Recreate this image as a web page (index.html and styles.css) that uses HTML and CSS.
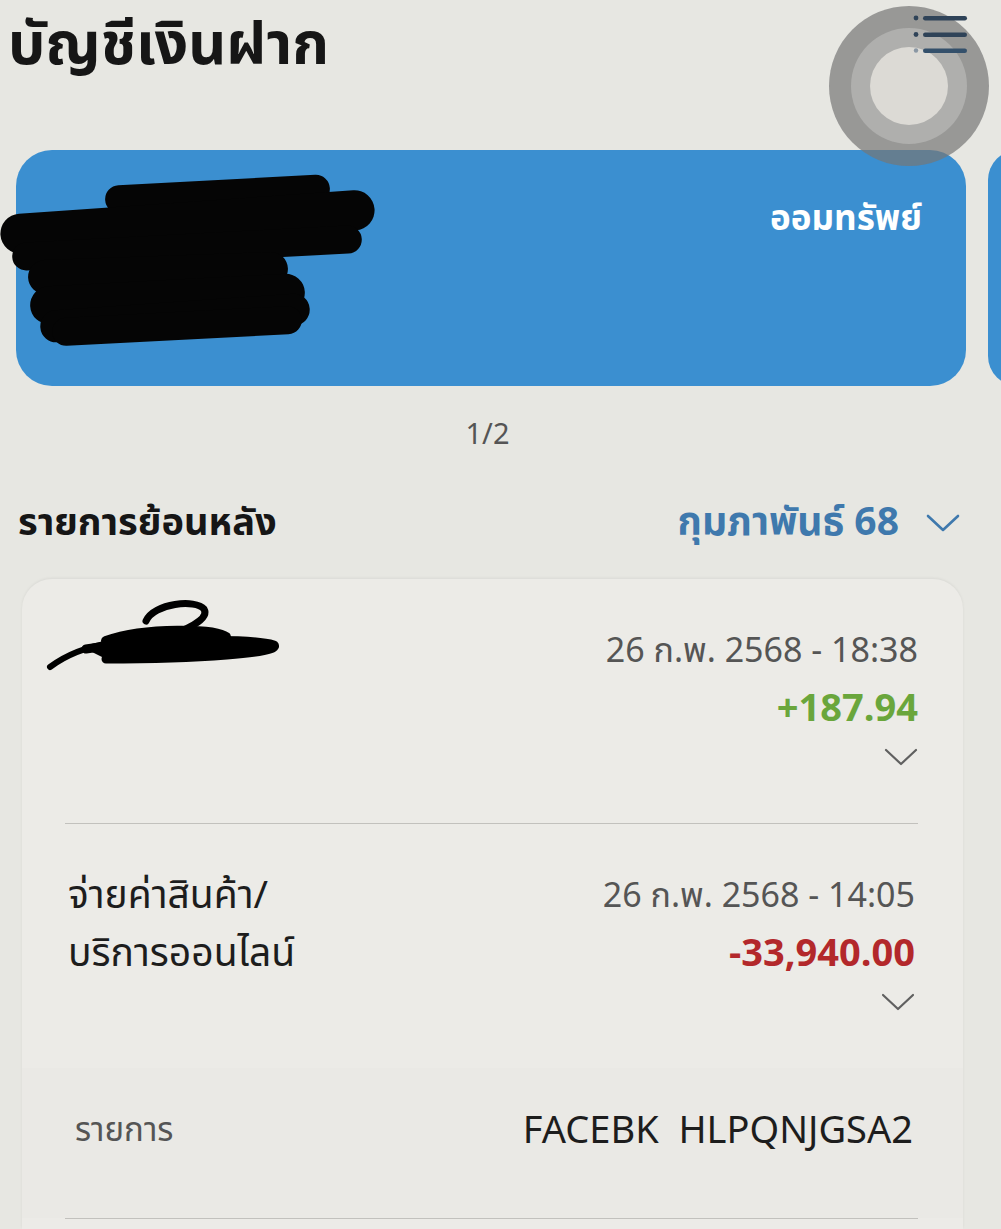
FILE: index.html
```html
<!DOCTYPE html>
<html lang="th">
<head>
<meta charset="utf-8">
<link rel="stylesheet" href="styles.css">
</head>
<body>
<div class="screen">
  <header class="top">
    <h1 class="title">บัญชีเงินฝาก</h1>
  </header>

  <div class="fab">
    <div class="fab-ring">
      <div class="fab-mid">
        <div class="fab-inner"></div>
      </div>
    </div>
    <svg class="menu-icon" width="56" height="40" viewBox="0 0 56 40">
      <circle cx="3" cy="3" r="2.4" fill="#2f4358"/>
      <circle cx="3" cy="19.5" r="2.4" fill="#2f4358"/>
      <circle cx="3" cy="35.5" r="2.2" fill="#8a97a4"/>
      <rect x="10" y="1" width="44" height="4.5" rx="2.2" fill="#2f4358"/>
      <rect x="10" y="17.5" width="44" height="4.5" rx="2.2" fill="#2f4358"/>
      <rect x="10" y="33.5" width="44" height="4.5" rx="2.2" fill="#34506b"/>
    </svg>
  </div>

  <section class="carousel">
    <div class="acct-card">
      <div class="redact redact-acct">
        <span class="blob b1"></span>
        <span class="blob b2"></span>
        <span class="blob b3"></span>
        <span class="blob b4"></span>
        <span class="blob b5"></span>
        <span class="blob b6"></span>
        <span class="blob b7"></span>
      </div>
      <div class="acct-type">ออมทรัพย์</div>
    </div>
    <div class="acct-card next"></div>
  </section>

  <div class="pager">1/2</div>

  <div class="section-head">
    <h2 class="section-title">รายการย้อนหลัง</h2>
    <div class="month">
      <span>กุมภาพันธ์ 68</span>
      <svg width="36" height="22" viewBox="0 0 36 22"><path d="M3 4 L18 18 L33 4" fill="none" stroke="#3f79ad" stroke-width="2.6" stroke-linecap="round" stroke-linejoin="round"/></svg>
    </div>
  </div>

  <section class="tx-card">
    <div class="tx">
      <div class="tx-left">
        <div class="redact redact-name">
          <svg width="250" height="80" viewBox="0 0 250 80">
            <path d="M100 24 C 108 6, 150 2, 158 12 C 164 22, 140 34, 112 42" fill="none" stroke="#000" stroke-width="7" stroke-linecap="round"/>
            <path d="M60 44 C 100 30, 170 32, 180 40 C 185 48, 120 54, 70 54" fill="#000" stroke="#000" stroke-width="10" stroke-linecap="round" stroke-linejoin="round"/>
            <path d="M40 52 C 90 44, 200 40, 228 48 C 236 56, 150 62, 60 62" fill="#000" stroke="#000" stroke-width="9" stroke-linecap="round" stroke-linejoin="round"/>
            <path d="M4 70 C 20 58, 40 50, 64 46" fill="none" stroke="#000" stroke-width="6" stroke-linecap="round"/>
          </svg>
        </div>
      </div>
      <div class="tx-right">
        <div class="tx-date">26 ก.พ. 2568 - 18:38</div>
        <div class="tx-amount plus">+187.94</div>
        <svg class="chev" width="34" height="20" viewBox="0 0 34 20"><path d="M2 3 L17 17 L32 3" fill="none" stroke="#606060" stroke-width="2.2" stroke-linecap="round" stroke-linejoin="round"/></svg>
      </div>
    </div>
    <div class="divider"></div>
    <div class="tx second">
      <div class="tx-left">
        <div class="tx-desc">จ่ายค่าสินค้า/<br>บริการออนไลน์</div>
      </div>
      <div class="tx-right">
        <div class="tx-date">26 ก.พ. 2568 - 14:05</div>
        <div class="tx-amount minus">-33,940.00</div>
        <svg class="chev" width="34" height="20" viewBox="0 0 34 20"><path d="M2 3 L17 17 L32 3" fill="none" stroke="#606060" stroke-width="2.2" stroke-linecap="round" stroke-linejoin="round"/></svg>
      </div>
    </div>
    <div class="detail">
      <div class="detail-row">
        <span class="detail-label">รายการ</span>
        <span class="detail-value">FACEBK&nbsp;&nbsp;HLPQNJGSA2</span>
      </div>
    </div>
    <div class="divider bottom"></div>
  </section>
</div>
</body>
</html>
```

FILE: styles.css
```css
* { box-sizing: border-box; }
html, body { margin: 0; padding: 0; }
body {
  background: #e7e7e2;
  font-family: "Noto Sans Thai", "Noto Sans", "DejaVu Sans", sans-serif;
  color: #1d1d1d;
  width: 1001px;
  height: 1229px;
  overflow: hidden;
}
.screen {
  position: relative;
  width: 1001px;
  height: 1229px;
  display: flex;
  flex-direction: column;
}
.top {
  height: 150px;
  padding: 0 0 0 8px;
}
.title {
  margin: 0;
  padding-top: 2px;
  font-size: 59px;
  font-weight: 700;
  line-height: 88px;
  color: #161616;
}

/* floating button */
.fab {
  position: absolute;
  left: 829px;
  top: 6px;
  width: 160px;
  height: 160px;
  z-index: 5;
}
.fab-ring {
  width: 160px;
  height: 160px;
  border-radius: 50%;
  background: rgba(118,118,118,0.7);
  display: flex;
  align-items: center;
  justify-content: center;
}
.fab-mid {
  width: 116px;
  height: 116px;
  border-radius: 50%;
  background: rgba(190,190,188,0.6);
  display: flex;
  align-items: center;
  justify-content: center;
}
.fab-inner {
  width: 78px;
  height: 78px;
  border-radius: 50%;
  background: #dcdad5;
}
.menu-icon {
  position: absolute;
  left: 84px;
  top: 9px;
}

/* carousel */
.carousel {
  display: flex;
  gap: 22px;
  padding-left: 16px;
  height: 236px;
}
.acct-card {
  position: relative;
  flex: 0 0 950px;
  height: 236px;
  border-radius: 36px;
  background: #3b8fd0;
  display: flex;
  justify-content: flex-end;
  padding: 48px 44px 0 0;
}
.acct-card.next { flex: 0 0 40px; border-radius: 30px 0 0 30px; }
.acct-type {
  color: #ffffff;
  font-size: 35px;
  font-weight: 700;
  line-height: 44px;
}
.redact { position: absolute; }
.redact-acct {
  left: -16px;
  top: 22px;
  width: 390px;
  height: 180px;
}
.blob {
  position: absolute;
  background: #050505;
  border-radius: 30px;
}
.b1 { left: 105px; top: 8px; width: 225px; height: 28px; transform: rotate(-3deg); }
.b2 { left: 0; top: 30px; width: 375px; height: 40px; transform: rotate(-4deg); }
.b3 { left: 12px; top: 62px; width: 350px; height: 28px; transform: rotate(-3deg); }
.b4 { left: 28px; top: 84px; width: 260px; height: 34px; transform: rotate(-2deg); }
.b5 { left: 30px; top: 108px; width: 275px; height: 38px; transform: rotate(-3deg); }
.b6 { left: 40px; top: 130px; width: 270px; height: 32px; transform: rotate(-4deg); }
.b7 { left: 52px; top: 140px; width: 250px; height: 28px; transform: rotate(-3deg); }

.pager {
  height: 98px;
  display: flex;
  align-items: center;
  justify-content: center;
  font-size: 29px;
  color: #555;
  padding-right: 26px;
}

.section-head {
  display: flex;
  justify-content: space-between;
  align-items: center;
  padding: 0 40px 0 18px;
  height: 78px;
}
.section-title {
  margin: 0;
  font-size: 38px;
  font-weight: 700;
  color: #161616;
}
.month {
  display: flex;
  align-items: center;
  gap: 26px;
  color: #3f79ad;
  font-size: 39px;
  font-weight: 700;
}

/* transactions card */
.tx-card {
  margin: 17px 38px 0 22px;
  flex: 1;
  background: #ecebe7;
  border-radius: 30px 30px 0 0;
  box-shadow: 0 -1px 3px rgba(0,0,0,0.06);
  display: flex;
  flex-direction: column;
}
.tx {
  display: flex;
  justify-content: space-between;
  padding: 44px 45px 0 46px;
  height: 244px;
}
.tx.second { padding-top: 44px; height: 244px; padding-right: 48px; }
.tx-left { position: relative; width: 380px; }
.redact-name { left: -22px; top: -26px; }
.tx-right {
  display: flex;
  flex-direction: column;
  align-items: flex-end;
}
.tx-date {
  font-size: 34px;
  color: #555;
  line-height: 58px;
}
.tx-amount {
  font-size: 38px;
  font-weight: 700;
  line-height: 58px;
}
.tx-amount.plus { color: #6aa63c; }
.tx-amount.minus { color: #b3282b; }
.chev { margin-top: 8px; }
.tx-desc {
  font-size: 39px;
  line-height: 58px;
  color: #1d1d1d;
}
.divider {
  height: 1px;
  background: #c2c1bd;
  margin: 0 45px 0 43px;
}
.detail {
  flex: 1;
  background: #eae9e5;
  padding: 38px 50px 0 53px;
}
.detail-row {
  display: flex;
  justify-content: space-between;
  align-items: center;
  height: 50px;
}
.detail-label {
  font-size: 33px;
  color: #555;
}
.detail-value {
  font-size: 38px;
  color: #1d1d1d;
}
.divider.bottom { margin-bottom: 10px; }
```
